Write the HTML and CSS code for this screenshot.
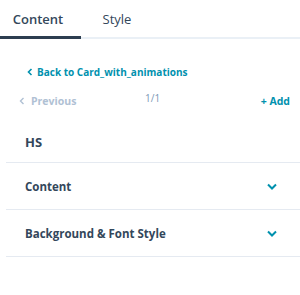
FILE: index.html
```html
<!DOCTYPE html>
<html lang="en">
<head>
    <meta charset="UTF-8">
    <meta name="viewport" content="width=device-width, initial-scale=1.0">
    <title>Content</title>
    <link rel="stylesheet" href="styles.css">
</head>
<body>

<div class="tabs">
    <div class="tab active">Content</div>
    <div class="tab">Style</div>
</div>

<div class="panel">
    <a class="back-link" href="#">
        <svg class="chev" width="6" height="8" viewBox="0 0 6 8"><path d="M4.5 1 L1.5 4 L4.5 7" fill="none" stroke="currentColor" stroke-width="1.6"/></svg>
        Back to Card_with_animations
    </a>

    <div class="pager">
        <span class="prev">
            <svg class="chev" width="6" height="8" viewBox="0 0 6 8"><path d="M4.5 1 L1.5 4 L4.5 7" fill="none" stroke="currentColor" stroke-width="1.4"/></svg>
            Previous
        </span>
        <span class="count">1/1</span>
        <a class="add" href="#">+ Add</a>
    </div>

    <div class="module-name">HS</div>

    <div class="section">
        <span>Content</span>
        <svg class="caret" width="10" height="7" viewBox="0 0 10 7"><path d="M1 1.5 L5 5.5 L9 1.5" fill="none" stroke="currentColor" stroke-width="2"/></svg>
    </div>
    <div class="section">
        <span>Background &amp; Font Style</span>
        <svg class="caret" width="10" height="7" viewBox="0 0 10 7"><path d="M1 1.5 L5 5.5 L9 1.5" fill="none" stroke="currentColor" stroke-width="2"/></svg>
    </div>
</div>

</body>
</html>
```

FILE: styles.css
```css
body {
    font-family: "Open Sans", Arial, sans-serif;
    background-color: #fff;
    color: #33475b;
    margin: 0;
}

.tabs {
    display: flex;
    height: 37px;
    border-bottom: 2px solid #eaf0f6;
}

.tab {
    display: flex;
    align-items: center;
    justify-content: center;
    font-size: 13px;
    color: #33475b;
    padding-top: 1px;
}

.tab.active {
    width: 81px;
    font-weight: 600;
    border-bottom: 3px solid #2d3e50;
    margin-bottom: -2px;
    box-sizing: border-box;
    padding-right: 5px;
}

.tab + .tab {
    margin-left: 10px;
    width: 52px;
}

.panel {
    padding-left: 6px;
}

.back-link {
    display: flex;
    align-items: center;
    gap: 4px;
    margin: 25px 0 0 21px;
    font-size: 10px;
    font-weight: 700;
    color: #0091ae;
    text-decoration: none;
    height: 16px;
}

.pager {
    display: flex;
    justify-content: space-between;
    align-items: flex-start;
    margin-top: 8px;
    padding: 0 10px 0 13px;
    height: 27px;
}

.prev {
    display: flex;
    align-items: center;
    gap: 6px;
    font-size: 10.5px;
    font-weight: 700;
    color: #b0c1d4;
    margin-top: 6px;
}

.count {
    font-size: 10px;
    color: #7c98b6;
    margin-right: 32px;
    margin-top: 3px;
}

.add {
    font-size: 10.5px;
    font-weight: 700;
    color: #0091ae;
    text-decoration: none;
    margin-top: 6px;
}

.module-name {
    font-size: 13px;
    font-weight: 700;
    padding: 18px 0 11px 19px;
    border-bottom: 1px solid #e5eaf1;
}

.section {
    display: flex;
    justify-content: space-between;
    align-items: center;
    height: 46px;
    padding: 0 23px 0 19px;
    font-size: 11.5px;
    font-weight: 700;
    border-bottom: 1px solid #e5eaf1;
}

.caret {
    color: #0091ae;
}
```
